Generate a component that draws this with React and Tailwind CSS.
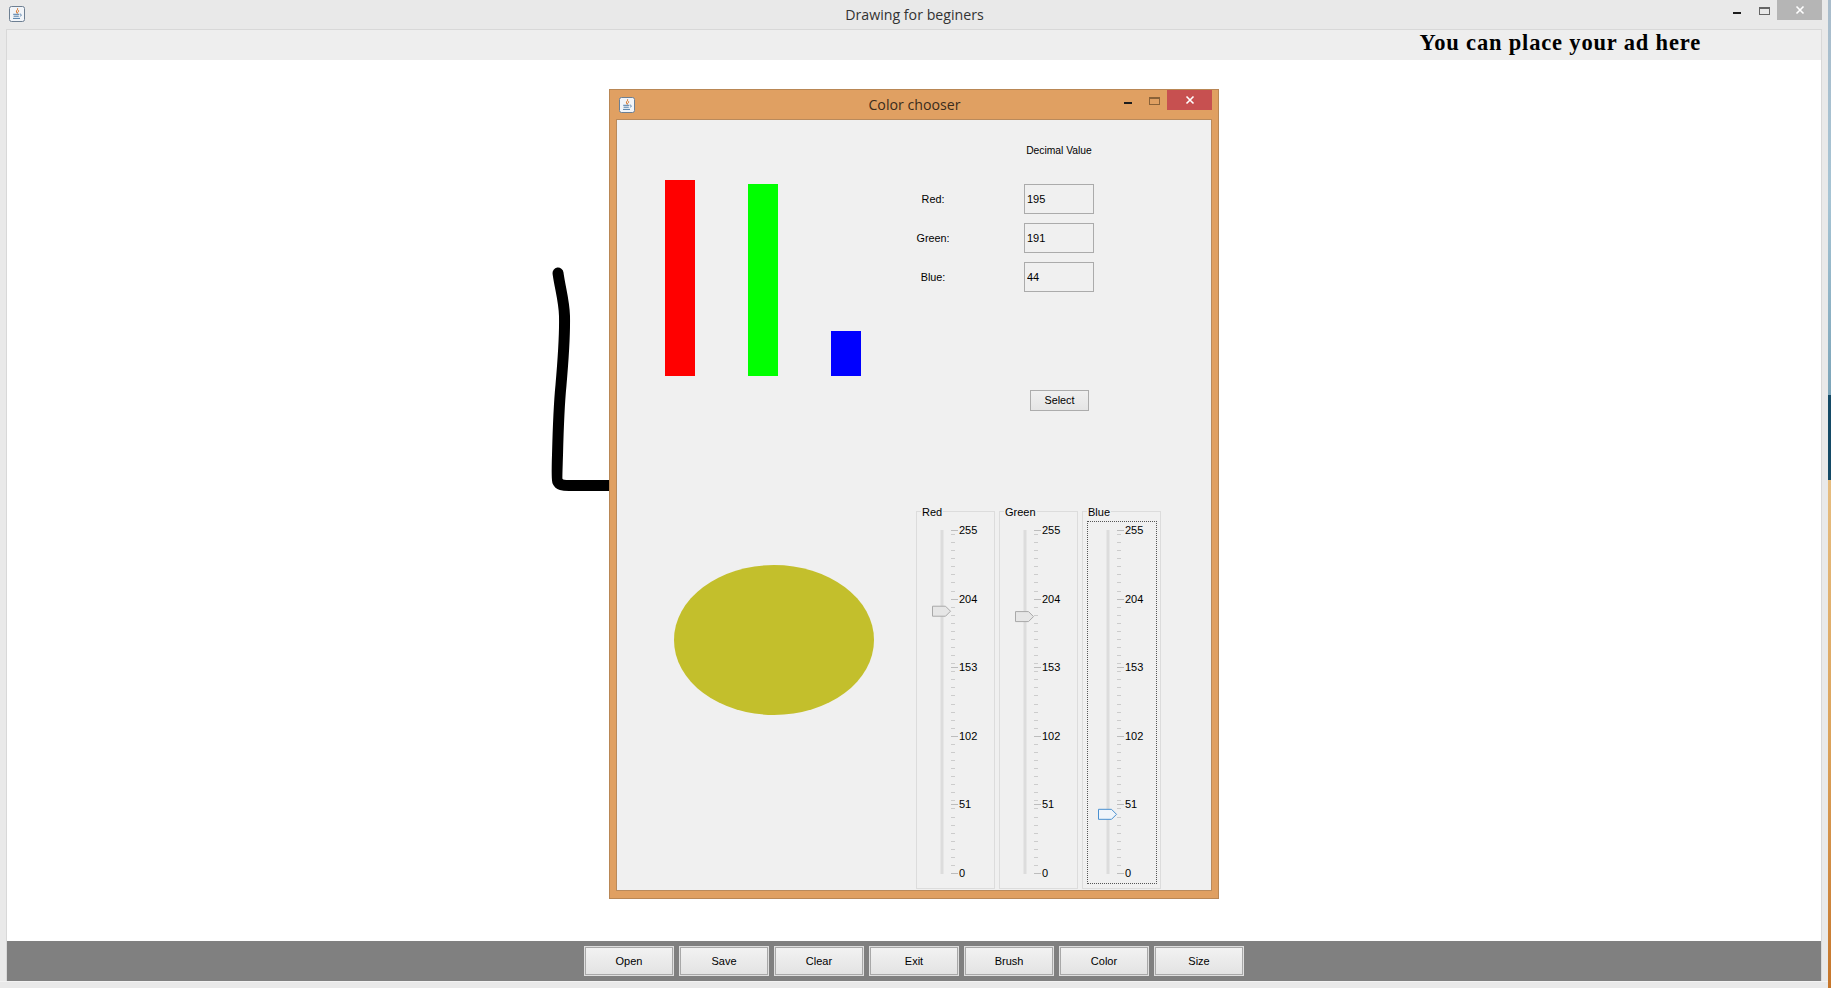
import React from "react";

const UI = "font-['Liberation_Sans',Arial,sans-serif]";

function JavaIcon() {
  return (
    <svg width="16" height="16" viewBox="0 0 16 16" className="shrink-0 block">
      <rect x="0.5" y="0.5" width="15" height="15" rx="2" fill="#f2f5f9" stroke="#6d7f92" />
      <path d="M8.6 2.2c.8 1.4-1.7 2.3-1.2 3.8.2.6.6 1 .9 1.4-.2-1 1.9-1.8 1.3-3.1" fill="none" stroke="#d9772b" strokeWidth="1" />
      <path d="M4.2 8.3h6M4.6 10.2h5.2M4 12.4h7" fill="none" stroke="#4f7ba6" strokeWidth="1" />
      <path d="M10.8 8.2c1.8-.4 2 1.6.1 2.2" fill="none" stroke="#4f7ba6" strokeWidth="0.9" />
    </svg>
  );
}

function WindowControls({ closeColor, lineColor, maxGap, minGap }) {
  return (
    <div className="flex items-start">
      <span className={`mt-[12px] block h-[2px] w-[8px] bg-[#1d1d1d] ${minGap}`} />
      <span className={`mt-[7px] block h-[8px] w-[11px] border ${lineColor} border-t-2 ${maxGap}`} />
      <span className={`flex h-[20px] w-[45px] items-center justify-center ${closeColor}`}>
        <svg width="10" height="10" viewBox="0 0 10 10">
          <path d="M1.5 1.5l7 7M8.5 1.5l-7 7" stroke="#fff" strokeWidth="1.6" />
        </svg>
      </span>
    </div>
  );
}

const TOP = 18;
const RANGE = 343;
const yOf = (v) => TOP + ((255 - v) / 255) * RANGE;

function SliderPanel({ name, value, focused }) {
  const minor = [];
  for (let v = 0; v <= 255; v += 6) minor.push(v);
  const major = [0, 51, 102, 153, 204, 255];
  const labels = [255, 204, 153, 102, 51, 0];
  const thumbY = yOf(value) + 0.5;
  const stroke = focused ? "#4a90d0" : "#a9a9a9";
  const fill = focused ? "#f0f5fa" : "#e6e6e6";
  return (
    <div className="relative h-[378px] w-[79px] border border-[#dcdcdc]">
      <span className="absolute left-[4px] top-[-7px] bg-[#f0f0f0] px-[1px] text-[11px] leading-[14px] text-black">{name}</span>
      {focused && <span className="absolute bottom-[4px] left-[4px] right-[3px] top-[9px] border border-dotted border-[#555]" />}
      <div className="flex h-full">
        <svg width="42" height="376" viewBox="0 0 42 376" className="block shrink-0">
          <rect x="23.5" y={TOP} width="3" height="344" fill="#dcdcdc" />
          {minor.map((v) => (
            <rect key={v} x="34" y={Math.round(yOf(v))} width="4" height="1" fill="#cccccc" />
          ))}
          {major.map((v) => (
            <rect key={v} x="34" y={Math.round(yOf(v))} width="7" height="1" fill="#bcbcbc" />
          ))}
          <path
            d={`M15.5 ${thumbY - 5}h13l5 5l-5 5h-13z`}
            fill={fill}
            stroke={stroke}
            strokeWidth="1"
          />
        </svg>
        <div className="flex h-[368px] flex-col justify-between pt-[11px] text-[11px] leading-[14px] text-black">
          {labels.map((l) => (
            <span key={l}>{l}</span>
          ))}
        </div>
      </div>
    </div>
  );
}

function Field({ label, value }) {
  return (
    <div className="flex h-[30px] items-center">
      <span className="w-[34px] text-center text-[10.8px] text-black">{label}</span>
      <input
        readOnly
        value={value}
        className="ml-[74px] h-[30px] w-[70px] border border-[#ababab] bg-[#f0f0f0] px-[2px] text-[11px] text-black outline-none"
      />
    </div>
  );
}

function ColorChooser() {
  return (
    <div className={`absolute left-[602px] top-[29px] flex h-[810px] w-[610px] flex-col border border-[#b98755] bg-[#e0a062] ${UI}`}>
      <div className="flex h-[29px] shrink-0 items-start pl-[9px]">
        <div className="mt-[7px]"><JavaIcon /></div>
        <span className="flex-1 pl-[70px] pt-[5px] text-center font-['Open_Sans',sans-serif] text-[14.2px] leading-[20px] text-[#3a2c1c]">Color chooser</span>
        <WindowControls closeColor="bg-[#c75050]" lineColor="border-[#8a6238]" minGap="mr-[17px]" maxGap="mr-[7px]" />
        <span className="w-[6px]" />
      </div>
      <div className="mx-[6px] mb-[7px] flex flex-1 border border-[#b98a5c] bg-[#f0f0f0]">
        <div className="w-[299px] shrink-0">
          <div className="ml-[48px] mt-[60px] flex h-[196px] items-end gap-[53px]">
            <div className="h-[196px] w-[30px] bg-[#ff0000]" />
            <div className="h-[192px] w-[30px] bg-[#00ff00]" />
            <div className="h-[45px] w-[30px] bg-[#0000ff]" />
          </div>
          <div className="ml-[57px] mt-[189px] h-[150px] w-[200px] rounded-[50%] bg-[#c3bf2c]" />
        </div>
        <div className="flex-1 text-black">
          <div className="ml-[108px] mt-[22px] w-[70px] whitespace-nowrap text-center text-[10.3px] leading-[18px]">Decimal Value</div>
          <div className="mt-[24px] flex flex-col gap-[9px]">
            <Field label="Red:" value="195" />
            <Field label="Green:" value="191" />
            <Field label="Blue:" value="44" />
          </div>
          <button className="ml-[114px] mt-[98px] block h-[21px] w-[59px] border border-[#acacac] bg-gradient-to-b from-[#f0f0f0] to-[#e5e5e5] text-[10.8px] text-black">Select</button>
          <div className="mt-[100px] flex gap-[4px]">
            <SliderPanel name="Red" value={195} />
            <SliderPanel name="Green" value={191} />
            <SliderPanel name="Blue" value={44} focused />
          </div>
        </div>
      </div>
    </div>
  );
}

export default function App() {
  const buttons = ["Open", "Save", "Clear", "Exit", "Brush", "Color", "Size"];
  return (
    <div className={`flex h-[988px] w-[1831px] overflow-hidden ${UI}`}>
      <div className="flex w-[1828px] flex-col bg-[#e9e9e9]">
        <div className="flex h-[29px] shrink-0 items-start pl-[9px]">
          <div className="mt-[6px]"><JavaIcon /></div>
          <span className="flex-1 pl-[71px] pt-[5px] text-center font-['Open_Sans',sans-serif] text-[14.2px] leading-[20px] text-[#333]">Drawing for beginers</span>
          <WindowControls closeColor="bg-[#b5b5b5]" lineColor="border-[#666]" minGap="mr-[18px]" maxGap="mr-[7px]" />
          <span className="w-[6px]" />
        </div>
        <div className="mx-[6px] flex h-[952px] flex-col border-x border-t border-[#d8d8d8]">
          <div className="flex h-[30px] shrink-0 items-center justify-end bg-[#eeeeee] pb-[5px] pr-[120px]">
            <span className="whitespace-nowrap font-['Liberation_Serif',serif] text-[22.5px] font-bold tracking-[0.83px] text-black">You can place your ad here</span>
          </div>
          <div className="relative flex-1 bg-white">
            <svg className="absolute left-0 top-0" width="610" height="500" viewBox="0 0 610 500">
              <path
                d="M551 213 C 553 228, 557 240, 557.5 256 C 558 280, 556 300, 554 325 C 552 345, 551 375, 550.5 395 C 550 410, 550 420, 550.5 421 C 552 425, 556 425.5, 562 425.5 L 603 425.5"
                fill="none"
                stroke="#000"
                strokeWidth="11"
                strokeLinecap="round"
                strokeLinejoin="round"
              />
            </svg>
            <ColorChooser />
          </div>
          <div className="flex h-[40px] shrink-0 items-center justify-center gap-[5px] bg-[#808080]">
            {buttons.map((b) => (
              <button
                key={b}
                className="h-[30px] w-[90px] border-2 border-[#dfdfdf] bg-gradient-to-b from-[#f2f2f2] to-[#e3e3e3] text-[11px] text-black outline outline-1 -outline-offset-2 outline-[#a8a8a8]"
              >
                {b}
              </button>
            ))}
          </div>
        </div>
        <div className="flex-1 border-t border-[#f2f2f2]" />
      </div>
      <div className="flex w-[3px] flex-col">
        <div className="h-[395px] bg-gradient-to-b from-[#a9bccb] via-[#a6c4d4] to-[#7ba4b8]" />
        <div className="h-[85px] bg-[#144a66]" />
        <div className="flex-1 bg-gradient-to-b from-[#e6bd80] via-[#dca45c] to-[#c6762a]" />
      </div>
    </div>
  );
}
